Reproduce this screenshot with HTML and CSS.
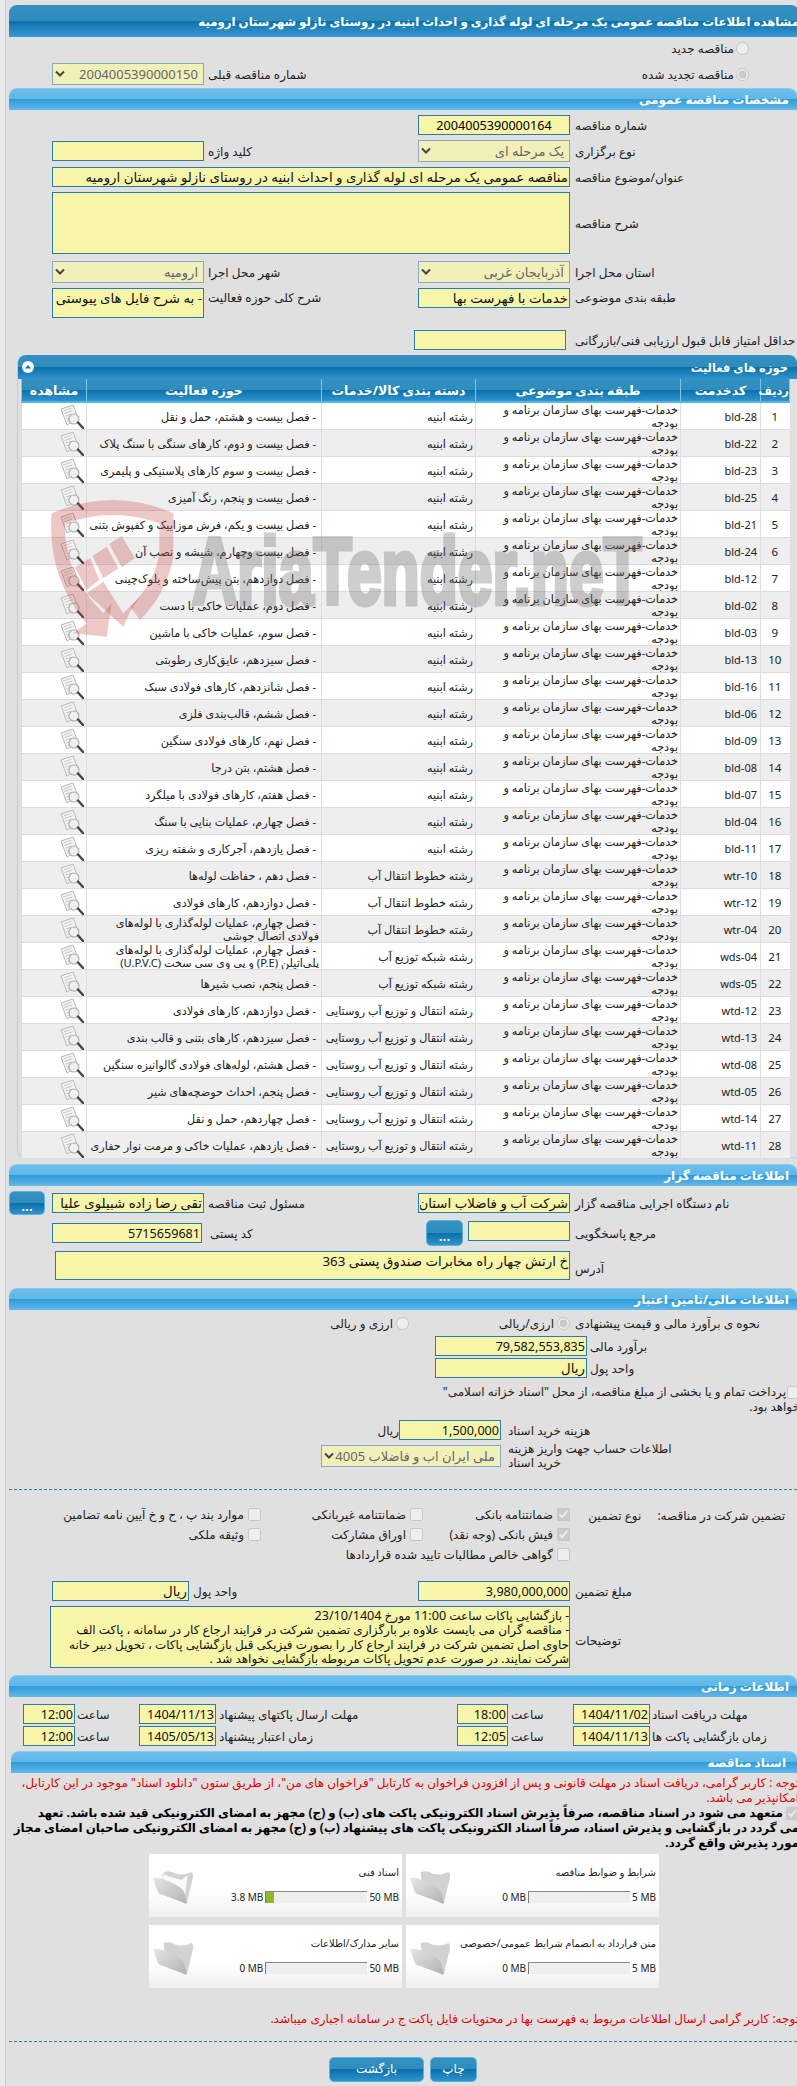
FILE: index.html
```html
<!DOCTYPE html>
<html lang="fa">
<head>
<meta charset="utf-8">
<title>مشاهده اطلاعات مناقصه</title>
<link rel="stylesheet" href="styles.css">
</head>
<body>
<svg class="defs" width="0" height="0" aria-hidden="true">
  <defs>
    <linearGradient id="fg" x1="0" y1="0" x2="1" y2="1"><stop offset="0" stop-color="#e6e6e6"/><stop offset="1" stop-color="#b2b2b2"/></linearGradient>
  </defs>
  <symbol id="doc" viewBox="0 0 24 25">
    <path d="M1 5 L13 1 L18 14 L7 21 Z" fill="#f4f4f4" stroke="#b8b8b8" stroke-width="1"/>
    <path d="M3.5 7 L11.5 4.2 M4.5 9.6 L12.5 6.8 M5.5 12.2 L11 10.2 M6.5 14.8 L10 13.5 M7.5 17.4 L10 16.5" stroke="#c0c0c0" stroke-width=".9" fill="none"/>
    <circle cx="14" cy="15" r="5" fill="#edf1f2" fill-opacity=".85" stroke="#ababab" stroke-width="1.1"/>
    <path d="M18 18.5 L23 24" stroke="#444" stroke-width="2.4" stroke-linecap="round"/>
  </symbol>
  <symbol id="folder" viewBox="0 0 44 37">
    <path d="M12 3 Q20 1 24 5 Q34 7 40 3 Q43 4 42 9 L36 34 Q35 36 33 35 L14 27 Z" fill="#d2d2d2"/>
    <path d="M1 9 Q9 8 22 15 Q32 20 33 24 L36 35 Q34 36 31 34 L9 26 Q6 25 5 21 Z" fill="url(#fg)"/>
  </symbol>
  <symbol id="folder-open" viewBox="0 0 44 37">
    <path d="M12 3 Q20 1 24 5 Q34 7 40 3 Q43 4 42 9 L36 34 Q35 36 33 35 L14 27 Z" fill="#d2d2d2"/>
    <path d="M10 5 L30 11 L37 6 L34 27 L14 20 Z" fill="#fafafa" stroke="#d8d8d8" stroke-width=".8"/>
    <path d="M1 9 Q9 8 22 15 Q32 20 33 24 L36 35 Q34 36 31 34 L9 26 Q6 25 5 21 Z" fill="url(#fg)"/>
  </symbol>
  <symbol id="chev" viewBox="0 0 10 8">
    <path d="M1 1.5 L5 5.5 L9 1.5" fill="none" stroke="#444" stroke-width="2"/>
  </symbol>
</svg>
<div class="page">
  <div class="wm" aria-hidden="true">
    <svg class="wm-shield" viewBox="0 0 450 510">
      <path d="M35 100 Q220 20 400 100 L400 230 Q380 340 300 420 L270 380 Q345 310 358 220 L358 130 Q220 80 75 130 Q70 280 190 400 L215 370 L200 470 L100 460 L140 430 Q20 290 35 100 Z"/>
      <path d="M105 262 L150 235 L178 300 L140 330 Z M158 228 L200 200 L235 265 L190 295 Z M208 192 L245 168 L285 235 L245 262 Z M140 340 L190 305 L250 400 L300 350 L270 395 L250 440 Z"/>
    </svg>
    <div class="wm-text">AriaTender.neT</div>
  </div>

  <div class="head dark title"><span>مشاهده اطلاعات مناقصه عمومی یک مرحله ای لوله گذاری و احداث ابنیه در روستای نازلو شهرستان ارومیه</span></div>

  <div class="choices">
    <label class="choice one"><input type="radio" disabled><span>مناقصه جدید</span></label>
    <div class="choice-row">
      <label class="choice"><input type="radio" disabled checked><span>مناقصه تجدید شده</span></label>
      <div class="prev">
        <span class="prev-lb">شماره مناقصه قبلی</span>
        <div class="sel f152 lat"><span>2004005390000150</span><svg class="chev"><use href="#chev"/></svg></div>
      </div>
    </div>
  </div>

  <div class="head light"><span>مشخصات مناقصه عمومی</span></div>

  <div class="form general">
    <div class="row h20"><span class="lb main">شماره مناقصه</span><input class="in f152 center lat strong" value="2004005390000164" readonly></div>
    <div class="row h22"><span class="lb main">نوع برگزاری</span><div class="sel f152"><span>یک مرحله ای</span><svg class="chev"><use href="#chev"/></svg></div><span class="lb second">کلید واژه</span><input class="in f152" readonly></div>
    <div class="row h20"><span class="lb main">عنوان/موضوع مناقصه</span><input class="in f518" value="مناقصه عمومی یک مرحله ای لوله گذاری و احداث ابنیه در روستای نازلو شهرستان ارومیه" readonly></div>
    <div class="row h62"><span class="lb main">شرح مناقصه</span><textarea class="in f518 fill" readonly></textarea></div>
    <div class="row h22 mt2"><span class="lb main">استان محل اجرا</span><div class="sel f152"><span>آذربایجان غربی</span><svg class="chev"><use href="#chev"/></svg></div><span class="lb second">شهر محل اجرا</span><div class="sel f152"><span>ارومیه</span><svg class="chev"><use href="#chev"/></svg></div></div>
    <div class="row h30 top"><span class="lb main">طبقه بندی موضوعی</span><input class="in f152 h20f" value="خدمات با فهرست بها" readonly><span class="lb second">شرح کلی حوزه فعالیت</span><textarea class="in f152 fill" readonly>- به شرح فایل های پیوستی</textarea></div>
    <div class="row h20 mt7"><span class="lb wide">حداقل امتیاز قابل قبول ارزیابی فنی/بازرگانی</span><input class="in f152" readonly></div>
  </div>

  <section class="panel">
    <div class="panel-head">
      <span>حوزه های فعالیت</span>
      <svg class="collapse" viewBox="0 0 12 12"><circle cx="6" cy="6" r="6" fill="#f4f8fb"/><path d="M3 7.5 L6 4 L9 7.5 Z" fill="#1b6f9f"/></svg>
    </div>
    <table class="grid">
      <colgroup><col class="c1"><col class="c2"><col class="c3"><col class="c4"><col class="c5"><col class="c6"></colgroup>
      <thead><tr><th>ردیف</th><th>کدخدمت</th><th>طبقه بندی موضوعی</th><th>دسته بندی کالا/خدمات</th><th>حوزه فعالیت</th><th>مشاهده</th></tr></thead>
      <tbody>
        <tr><td class="n">1</td><td class="code">bld-28</td><td>خدمات-فهرست بهای سازمان برنامه و بودجه</td><td>رشته ابنیه</td><td>&nbsp;- فصل بیست و هشتم، حمل و نقل</td><td class="v"><svg class="doc"><use href="#doc"/></svg></td></tr>
        <tr><td class="n">2</td><td class="code">bld-22</td><td>خدمات-فهرست بهای سازمان برنامه و بودجه</td><td>رشته ابنیه</td><td>&nbsp;- فصل بیست و دوم، کارهای سنگی با سنگ پلاک</td><td class="v"><svg class="doc"><use href="#doc"/></svg></td></tr>
        <tr><td class="n">3</td><td class="code">bld-23</td><td>خدمات-فهرست بهای سازمان برنامه و بودجه</td><td>رشته ابنیه</td><td>&nbsp;- فصل بیست و سوم کارهای پلاستیکی و پلیمری</td><td class="v"><svg class="doc"><use href="#doc"/></svg></td></tr>
        <tr><td class="n">4</td><td class="code">bld-25</td><td>خدمات-فهرست بهای سازمان برنامه و بودجه</td><td>رشته ابنیه</td><td>&nbsp;- فصل بیست و پنجم، رنگ آمیزی</td><td class="v"><svg class="doc"><use href="#doc"/></svg></td></tr>
        <tr><td class="n">5</td><td class="code">bld-21</td><td>خدمات-فهرست بهای سازمان برنامه و بودجه</td><td>رشته ابنیه</td><td>&nbsp;- فصل بیست و یکم، فرش موزاییک و کفپوش بتنی</td><td class="v"><svg class="doc"><use href="#doc"/></svg></td></tr>
        <tr><td class="n">6</td><td class="code">bld-24</td><td>خدمات-فهرست بهای سازمان برنامه و بودجه</td><td>رشته ابنیه</td><td>&nbsp;- فصل بیست وچهارم، شیشه و نصب آن</td><td class="v"><svg class="doc"><use href="#doc"/></svg></td></tr>
        <tr><td class="n">7</td><td class="code">bld-12</td><td>خدمات-فهرست بهای سازمان برنامه و بودجه</td><td>رشته ابنیه</td><td>&nbsp;- فصل دوازدهم، بتن پیش‌ساخته و بلوک‌چینی</td><td class="v"><svg class="doc"><use href="#doc"/></svg></td></tr>
        <tr><td class="n">8</td><td class="code">bld-02</td><td>خدمات-فهرست بهای سازمان برنامه و بودجه</td><td>رشته ابنیه</td><td>&nbsp;- فصل دوم، عملیات خاکی با دست</td><td class="v"><svg class="doc"><use href="#doc"/></svg></td></tr>
        <tr><td class="n">9</td><td class="code">bld-03</td><td>خدمات-فهرست بهای سازمان برنامه و بودجه</td><td>رشته ابنیه</td><td>&nbsp;- فصل سوم، عملیات خاکی با ماشین</td><td class="v"><svg class="doc"><use href="#doc"/></svg></td></tr>
        <tr><td class="n">10</td><td class="code">bld-13</td><td>خدمات-فهرست بهای سازمان برنامه و بودجه</td><td>رشته ابنیه</td><td>&nbsp;- فصل سیزدهم، عایق‌کاری رطوبتی</td><td class="v"><svg class="doc"><use href="#doc"/></svg></td></tr>
        <tr><td class="n">11</td><td class="code">bld-16</td><td>خدمات-فهرست بهای سازمان برنامه و بودجه</td><td>رشته ابنیه</td><td>&nbsp;- فصل شانزدهم، کارهای فولادی سبک</td><td class="v"><svg class="doc"><use href="#doc"/></svg></td></tr>
        <tr><td class="n">12</td><td class="code">bld-06</td><td>خدمات-فهرست بهای سازمان برنامه و بودجه</td><td>رشته ابنیه</td><td>&nbsp;- فصل ششم، قالب‌بندی فلزی</td><td class="v"><svg class="doc"><use href="#doc"/></svg></td></tr>
        <tr><td class="n">13</td><td class="code">bld-09</td><td>خدمات-فهرست بهای سازمان برنامه و بودجه</td><td>رشته ابنیه</td><td>&nbsp;- فصل نهم، کارهای فولادی سنگین</td><td class="v"><svg class="doc"><use href="#doc"/></svg></td></tr>
        <tr><td class="n">14</td><td class="code">bld-08</td><td>خدمات-فهرست بهای سازمان برنامه و بودجه</td><td>رشته ابنیه</td><td>&nbsp;- فصل هشتم، بتن درجا</td><td class="v"><svg class="doc"><use href="#doc"/></svg></td></tr>
        <tr><td class="n">15</td><td class="code">bld-07</td><td>خدمات-فهرست بهای سازمان برنامه و بودجه</td><td>رشته ابنیه</td><td>&nbsp;- فصل هفتم، کارهای فولادی با میلگرد</td><td class="v"><svg class="doc"><use href="#doc"/></svg></td></tr>
        <tr><td class="n">16</td><td class="code">bld-04</td><td>خدمات-فهرست بهای سازمان برنامه و بودجه</td><td>رشته ابنیه</td><td>&nbsp;- فصل چهارم، عملیات بنایی با سنگ</td><td class="v"><svg class="doc"><use href="#doc"/></svg></td></tr>
        <tr><td class="n">17</td><td class="code">bld-11</td><td>خدمات-فهرست بهای سازمان برنامه و بودجه</td><td>رشته ابنیه</td><td>&nbsp;- فصل یازدهم، آجرکاری و شفته ریزی</td><td class="v"><svg class="doc"><use href="#doc"/></svg></td></tr>
        <tr><td class="n">18</td><td class="code">wtr-10</td><td>خدمات-فهرست بهای سازمان برنامه و بودجه</td><td>رشته خطوط انتقال آب</td><td>&nbsp;- فصل دهم ، حفاظت لوله‌ها</td><td class="v"><svg class="doc"><use href="#doc"/></svg></td></tr>
        <tr><td class="n">19</td><td class="code">wtr-12</td><td>خدمات-فهرست بهای سازمان برنامه و بودجه</td><td>رشته خطوط انتقال آب</td><td>&nbsp;- فصل دوازدهم، کارهای فولادی</td><td class="v"><svg class="doc"><use href="#doc"/></svg></td></tr>
        <tr><td class="n">20</td><td class="code">wtr-04</td><td>خدمات-فهرست بهای سازمان برنامه و بودجه</td><td>رشته خطوط انتقال آب</td><td class="wrap">&nbsp;- فصل چهارم، عملیات لوله‌گذاری با لوله‌های فولادی اتصال جوشی</td><td class="v"><svg class="doc"><use href="#doc"/></svg></td></tr>
        <tr><td class="n">21</td><td class="code">wds-04</td><td>خدمات-فهرست بهای سازمان برنامه و بودجه</td><td>رشته شبکه توزیع آب</td><td class="wrap">&nbsp;- فصل چهارم، عملیات لوله‌گذاری با لوله‌های پلی‌اتیلن (P.E) و پی وی سی سخت (U.P.V.C)</td><td class="v"><svg class="doc"><use href="#doc"/></svg></td></tr>
        <tr><td class="n">22</td><td class="code">wds-05</td><td>خدمات-فهرست بهای سازمان برنامه و بودجه</td><td>رشته شبکه توزیع آب</td><td>&nbsp;- فصل پنجم، نصب شیرها</td><td class="v"><svg class="doc"><use href="#doc"/></svg></td></tr>
        <tr><td class="n">23</td><td class="code">wtd-12</td><td>خدمات-فهرست بهای سازمان برنامه و بودجه</td><td>رشته انتقال و توزیع آب روستایی</td><td>&nbsp;- فصل دوازدهم، کارهای فولادی</td><td class="v"><svg class="doc"><use href="#doc"/></svg></td></tr>
        <tr><td class="n">24</td><td class="code">wtd-13</td><td>خدمات-فهرست بهای سازمان برنامه و بودجه</td><td>رشته انتقال و توزیع آب روستایی</td><td>&nbsp;- فصل سیزدهم، کارهای بتنی و قالب بندی</td><td class="v"><svg class="doc"><use href="#doc"/></svg></td></tr>
        <tr><td class="n">25</td><td class="code">wtd-08</td><td>خدمات-فهرست بهای سازمان برنامه و بودجه</td><td>رشته انتقال و توزیع آب روستایی</td><td>&nbsp;- فصل هشتم، لوله‌های فولادی گالوانیزه سنگین</td><td class="v"><svg class="doc"><use href="#doc"/></svg></td></tr>
        <tr><td class="n">26</td><td class="code">wtd-05</td><td>خدمات-فهرست بهای سازمان برنامه و بودجه</td><td>رشته انتقال و توزیع آب روستایی</td><td>&nbsp;- فصل پنجم، احداث حوضچه‌های شیر</td><td class="v"><svg class="doc"><use href="#doc"/></svg></td></tr>
        <tr><td class="n">27</td><td class="code">wtd-14</td><td>خدمات-فهرست بهای سازمان برنامه و بودجه</td><td>رشته انتقال و توزیع آب روستایی</td><td>&nbsp;- فصل چهاردهم، حمل و نقل</td><td class="v"><svg class="doc"><use href="#doc"/></svg></td></tr>
        <tr><td class="n">28</td><td class="code">wtd-11</td><td>خدمات-فهرست بهای سازمان برنامه و بودجه</td><td>رشته انتقال و توزیع آب روستایی</td><td>&nbsp;- فصل یازدهم، عملیات خاکی و مرمت نوار حفاری</td><td class="v"><svg class="doc"><use href="#doc"/></svg></td></tr>
      </tbody>
    </table>
  </section>

  <div class="head light sec-vendor"><span>اطلاعات مناقصه گزار</span></div>
  <div class="form vendor">
    <div class="row h24"><span class="lb main">نام دستگاه اجرایی مناقصه گزار</span><input class="in f152" value="شرکت آب و فاضلاب استان" readonly><span class="lb second">مسئول ثبت مناقصه</span><input class="in f152" value="تقی رضا زاده شبیلوی علیا" readonly><button class="dots far" type="button">...</button></div>
    <div class="row h26"><span class="lb main">مرجع پاسخگویی</span><input class="in f102 up" readonly><button class="dots near" type="button">...</button><span class="lb post">کد پستی</span><input class="in f150 lat" value="5715659681" readonly></div>
    <div class="row h29"><span class="lb main low">آدرس</span><textarea class="in f515 fill" readonly>خ ارتش چهار راه مخابرات صندوق پستی 363</textarea></div>
  </div>

  <div class="head light sec-money"><span>اطلاعات مالی/تامین اعتبار</span></div>
  <div class="money">
    <div class="row h16 kind"><span class="lb main">نحوه ی برآورد مالی و قیمت پیشنهادی</span>
      <label class="choice tight cur"><input type="radio" disabled checked><span>ارزی/ریالی</span></label>
      <label class="choice tight"><input type="radio" disabled><span>ارزی و ریالی</span></label>
    </div>
    <div class="row h20 m5"><span class="lb est">برآورد مالی</span><input class="in f152 lat" value="79,582,553,835" readonly></div>
    <div class="row h20 m2"><span class="lb est">واحد پول</span><input class="in f152" value="ریال" readonly></div>
    <label class="treasury"><input type="checkbox" disabled>پرداخت تمام و یا بخشی از مبلغ مناقصه، از محل "اسناد خزانه اسلامی" خواهد بود.</label>
    <div class="row h20 m6"><span class="lb cost">هزینه خرید اسناد</span><input class="in f102 lat" value="1,500,000" readonly><span>ریال</span></div>
    <div class="row h22 m5 acct"><div class="lb cost"><span class="acct-lb">اطلاعات حساب جهت واریز هزینه خرید اسناد</span></div><div class="sel f180"><span>ملی ایران اب و فاضلاب 4005</span><svg class="chev"><use href="#chev"/></svg></div></div>
    <hr class="dash">
    <div class="guar">
      <div class="guar-lb"><span>تضمین شرکت در مناقصه:</span><span>نوع تضمین</span></div>
      <div class="guar-grid">
        <label class="g"><input type="checkbox" disabled checked><span>ضمانتنامه بانکی</span></label>
        <label class="g"><input type="checkbox" disabled><span>ضمانتنامه غیربانکی</span></label>
        <label class="g"><input type="checkbox" disabled><span>موارد بند پ ، ح و خ آیین نامه تضامین</span></label>
        <label class="g"><input type="checkbox" disabled checked><span>فیش بانکی (وجه نقد)</span></label>
        <label class="g"><input type="checkbox" disabled><span>اوراق مشارکت</span></label>
        <label class="g"><input type="checkbox" disabled><span>وثیقه ملکی</span></label>
        <label class="g span3"><input type="checkbox" disabled><span>گواهی خالص مطالبات تایید شده قراردادها</span></label>
      </div>
    </div>
    <div class="form amounts">
      <div class="row h20"><span class="lb main">مبلغ تضمین</span><input class="in f152 lat" value="3,980,000,000" readonly><span class="lb unit">واحد پول</span><input class="in f137" value="ریال" readonly></div>
      <div class="row h62"><span class="lb main low">توضیحات</span><div class="in note">- بازگشایی پاکات ساعت <span class="lat">11:00</span> مورخ <span class="lat">23/10/1404</span><br>- مناقصه گران می بایست علاوه بر بارگزاری تضمین شرکت در فرایند ارجاع کار در سامانه ، پاکت الف حاوی اصل تضمین شرکت در فرایند ارجاع کار را بصورت فیزیکی قبل بازگشایی پاکات ، تحویل دبیر خانه شرکت نمایند. در صورت عدم تحویل پاکات مربوطه بازگشایی نخواهد شد .</div></div>
    </div>
  </div>

  <div class="head light sec-time"><span>اطلاعات زمانی</span></div>
  <div class="form times">
    <div class="row h20"><span class="lb t1">مهلت دریافت اسناد</span><input class="in f77 lat" value="1404/11/02" readonly><span class="lb t2">ساعت</span><input class="in f51 lat" value="18:00" readonly><span class="lb t3">مهلت ارسال پاکتهای پیشنهاد</span><input class="in f77 lat" value="1404/11/13" readonly><span class="lb t4">ساعت</span><input class="in f52 lat" value="12:00" readonly></div>
    <div class="row h20"><span class="lb t1">زمان بازگشایی پاکت ها</span><input class="in f77 lat" value="1404/11/13" readonly><span class="lb t2">ساعت</span><input class="in f51 lat" value="12:05" readonly><span class="lb t3">زمان اعتبار پیشنهاد</span><input class="in f77 lat" value="1405/05/13" readonly><span class="lb t4">ساعت</span><input class="in f52 lat" value="12:00" readonly></div>
  </div>

  <div class="head light sec-docs"><span>اسناد مناقصه</span></div>
  <p class="warn first">توجه : کاربر گرامی، دریافت اسناد در مهلت قانونی و پس از افزودن فراخوان به کارتابل "فراخوان های من"، از طریق ستون "دانلود اسناد" موجود در این کارتابل،<br>امکانپذیر می باشد.</p>
  <label class="pledge"><input type="checkbox" disabled checked> متعهد می شود در اسناد مناقصه، صرفاً پذیرش اسناد الکترونیکی پاکت های (ب) و (ج) مجهز به امضای الکترونیکی قید شده باشد. تعهد<br>می گردد در بازگشایی و پذیرش اسناد، صرفاً اسناد الکترونیکی پاکت های پیشنهاد (ب) و (ج) مجهز به امضای الکترونیکی صاحبان امضای مجاز<br>مورد پذیرش واقع گردد.</label>

  <div class="cards">
    <div class="card">
      <div class="card-main">
        <div class="card-title">شرایط و ضوابط مناقصه</div>
        <div class="quota"><span>5 MB</span><div class="bar"></div><span>0 MB</span></div>
      </div>
      <svg class="folder"><use href="#folder"/></svg>
    </div>
    <div class="card">
      <div class="card-main">
        <div class="card-title">اسناد فنی</div>
        <div class="quota"><span>50 MB</span><div class="bar"><i style="width:7.6%"></i></div><span>3.8 MB</span></div>
      </div>
      <svg class="folder"><use href="#folder-open"/></svg>
    </div>
    <div class="card">
      <div class="card-main">
        <div class="card-title">متن قرارداد به انضمام شرایط عمومی/خصوصی</div>
        <div class="quota"><span>5 MB</span><div class="bar"></div><span>0 MB</span></div>
      </div>
      <svg class="folder"><use href="#folder"/></svg>
    </div>
    <div class="card">
      <div class="card-main">
        <div class="card-title">سایر مدارک/اطلاعات</div>
        <div class="quota"><span>50 MB</span><div class="bar"></div><span>0 MB</span></div>
      </div>
      <svg class="folder"><use href="#folder"/></svg>
    </div>
  </div>

  <p class="warn second-warn">توجه: کاربر گرامی ارسال اطلاعات مربوط به فهرست بها در محتویات فایل پاکت ج در سامانه اجباری میباشد.</p>
  <hr class="dash end">
  <div class="actions">
    <button class="act print" type="button">چاپ</button>
    <button class="act back" type="button">بازگشت</button>
  </div>
</div>
</body>
</html>
```

FILE: styles.css
```css
* { box-sizing: border-box; }
html, body { margin: 0; padding: 0; }
body {
  background: #e9e9e9;
  font-family: "Noto Sans", "DejaVu Sans", sans-serif;
  font-size: 12px;
  color: #222;
  overflow-x: hidden;
}
.defs { position: absolute; }

.page {
  position: relative;
  margin-left: 5px;
  height: 2086px;
  overflow: hidden;
  border-left: 1px solid #cacaca;
  padding: 5px 0 0 3px;
  background: #e0e0e0;
  direction: rtl;
}

/* section heads */
.head {
  height: 22px;
  border-radius: 8px 8px 0 0;
  color: #fff;
  font-weight: bold;
  display: flex;
  align-items: center;
  white-space: nowrap;
  padding: 0 8px;
}
.dark {
  background: linear-gradient(#3391c2 0%, #2f8dbe 50%, #0a70aa 50%, #3a9ad6 100%);
}
.light {
  border-top: 1px solid #86cef2;
  border-bottom: 1px solid #66b8e6;
  background: linear-gradient(#6cc0ec 0%, #5fb6e8 50%, #2b9bd9 50%, #5fb5e6 100%);
}
.title { height: 32px; font-size: 11.75px; padding: 0; margin-right: -2px; }
.sec-vendor { margin-top: 6px; }
.sec-money { margin-top: 8px; }
.sec-time { margin-top: 7px; }
.sec-docs { margin: 5px 0 0 2px; padding-right: 11px; }

/* top choices */
.choices { height: 51px; }
.choice {
  display: flex;
  align-items: center;
  gap: 2px;
  flex: none;
}
.choice input { margin: 0; }
.one { height: 23px; padding-right: 48px; }
.choice-row {
  display: flex;
  align-items: center;
  height: 28px;
  padding-right: 48px;
}
.prev {
  display: flex;
  align-items: center;
  margin-right: auto;
  margin-left: 43px;
}
.prev-lb { margin-left: 4px; }

/* form rows */
.form { display: flex; flex-direction: column; gap: 5px; }
.general { padding-top: 5px; }
.vendor { padding-top: 5px; gap: 5px; }
.row { display: flex; align-items: center; flex: none; }
.top { align-items: flex-start; }
.h16 { height: 16px; }
.h20 { height: 20px; }
.h22 { height: 22px; }
.h24 { height: 24px; }
.h26 { height: 26px; }
.h29 { height: 29px; }
.h30 { height: 30px; }
.h62 { height: 62px; }
.mt2 { margin-top: 2px; }
.mt7 { margin-top: 7px; }
.m2 { margin-top: 2px; }
.m5 { margin-top: 5px; }
.m6 { margin-top: 6px; }

.lb { flex: none; text-align: left; white-space: nowrap; }
.main { width: 227px; padding-left: 5px; }
.second { width: 214px; padding-left: 4px; }
.wide { width: 231px; padding-left: 9px; }
.post { width: 224px; padding-left: 8px; }
.est { width: 210px; padding-left: 3px; }
.cost { width: 296px; padding-left: 7px; }
.unit { width: 229px; padding-left: 4px; }
.low { padding-top: 6px; }
.t1 { width: 147px; padding-left: 2px; }
.t2 { width: 65px; padding-left: 3px; }
.t3 { width: 241px; padding-left: 3px; }
.t4 { width: 64px; padding-left: 2px; }
.top .lb { padding-top: 1px; }

.in {
  display: block;
  flex: none;
  height: 20px;
  margin: 0;
  padding: 0 1px;
  border: 1px solid #2a7bb0;
  background: #f7f5a8;
  color: #111;
  font: inherit;
  font-size: 13.33px;
  direction: rtl;
  outline: none;
  border-radius: 0;
  resize: none;
}
.fill { height: 100%; overflow: hidden; }
.h20f { height: 20px; }
.center { text-align: center; }
.up { margin-bottom: 5px; }
.f51 { width: 51px; }
.f52 { width: 52px; }
.f77 { width: 77px; }
.f102 { width: 102px; }
.f137 { width: 137px; }
.f150 { width: 150px; }
.f152 { width: 152px; }
.f180 { width: 180px; }
.f515 { width: 515px; }
.f518 { width: 518px; }
.lat { font-family: "Noto Sans", "DejaVu Sans", sans-serif; font-size: 12.6px; }
.strong { color: #000; }

.sel {
  flex: none;
  height: 22px;
  display: flex;
  align-items: center;
  justify-content: space-between;
  padding: 0 5px 0 2px;
  border: 1px solid #86a9bd;
  background: #f2f0b9;
  color: #666;
  font-size: 13px;
  white-space: nowrap;
  overflow: hidden;
}
.chev { width: 10px; height: 8px; flex: none; }

.dots {
  flex: none;
  width: 37px;
  height: 26px;
  padding: 8px 0 0;
  border: 1px solid #58b4de;
  border-radius: 5px;
  background: linear-gradient(#3391c2 0%, #2f8dbe 50%, #0a70aa 50%, #2f93cc 100%);
  color: #fff;
  font: bold 10px "DejaVu Sans", sans-serif;
}
.far { width: 36px; height: 24px; margin-right: 7px; }
.near { margin-right: 5px; }

/* activity panel */
.panel {
  margin-top: 5px;
  margin-left: 8px;
  border: 1px solid #a9d4ea;
  border-top: 0;
  border-right: 0;
  border-radius: 8px 8px 0 8px;
  height: 803px;
}
.panel-head {
  height: 24px;
  display: flex;
  align-items: center;
  justify-content: space-between;
  padding: 0 9px 0 4px;
  border-radius: 8px 8px 0 0;
  color: #fff;
  font-size: 11.5px;
  font-weight: bold;
  background: linear-gradient(#3391c2 0%, #2f8dbe 50%, #0a70aa 50%, #2f93cc 100%);
}
.collapse { width: 12px; height: 12px; }
.grid {
  width: 768px;
  margin: 0 7px 0 0;
  table-layout: fixed;
  border-collapse: collapse;
  font-size: 11.2px;
  line-height: 13px;
}
.c1 { width: 29px; }
.c2 { width: 80px; }
.c3 { width: 205px; }
.c4 { width: 154px; }
.c5 { width: 235px; }
.c6 { width: 65px; }
.grid th {
  height: 23px;
  padding: 0;
  color: #fff;
  font-size: 12.5px;
  font-weight: bold;
  border-right: 1px solid #7cc6ea;
  border-left: 1px solid #7cc6ea;
  border-bottom: 2px solid #5ab4e2;
  background: linear-gradient(#3391c2 0%, #2f8dbe 50%, #0a70aa 50%, #2f93cc 100%);
}
.grid th:first-child { font-size: 11.5px; }
.grid td {
  height: 27px;
  padding: 0 2px 0 1px;
  border-left: 1px solid #dedede;
  border-bottom: 1px solid #dcdcdc;
  background: #fff;
  text-align: right;
  overflow: hidden;
}
.grid td:nth-child(3) { padding-left: 12px; }
.grid td:nth-child(4),
.grid td:nth-child(5) { white-space: nowrap; }
.grid td.wrap { white-space: normal; }
.grid tbody tr:nth-child(even) td { background: #eeeeee; }
.grid td.n { text-align: center; font-size: 11.5px; }
.grid td.code { padding-right: 3px; font-size: 11px; }
.grid td.v { padding-right: 2px; line-height: 0; }
.doc { width: 24px; height: 25px; display: inline-block; vertical-align: top; }

/* money */
.kind { margin-top: 5px; }
.cur { width: 161px; }
.tight { gap: 3px; }
.treasury {
  display: block;
  margin: 7px -3px 0 0;
  padding-left: 424px;
  line-height: 14.5px;
  min-height: 29px;
}
.treasury input { margin: 0 0 0 1px; width: 13px; height: 13px; vertical-align: middle; }
.acct-lb { display: block; margin-right: 110px; white-space: normal; text-align: left; line-height: 14.5px; }
.acct .lb { padding-left: 7px; }
.dash {
  margin: 22px 0 0;
  height: 0;
  border: 0;
  border-top: 1px dashed #2a7fb0;
}
.guar { display: flex; margin-top: 14px; }
.guar-lb {
  flex: none;
  width: 227px;
  padding: 3px 12px 0 0;
  display: flex;
  gap: 16px;
}
.guar-grid {
  display: grid;
  grid-template-columns: 147px 162px 1fr;
  grid-auto-rows: 20px;
  align-items: center;
}
.g { display: flex; align-items: center; gap: 4px; white-space: nowrap; }
.g input { margin: 0; flex: none; width: 13px; height: 13px; }
.span3 { grid-column: span 3; }
.amounts { margin-top: 17px; }
.note {
  width: 520px;
  height: 62px;
  padding: 2px 0 0 1px;
  font-size: 12px;
  line-height: 14.3px;
  overflow: hidden;
}

.times { margin-top: 7px; gap: 2px; }

/* docs */
.warn { margin: 0; color: #e60000; line-height: 14.5px; white-space: nowrap; }
.first { margin: 3px -2px 0 0; }
.pledge {
  display: block;
  margin: 0 -2px 0 0;
  color: #000;
  font-size: 11.88px;
  font-weight: bold;
  line-height: 14.4px;
  white-space: nowrap;
}
.pledge input { margin: 0; width: 13px; height: 13px; vertical-align: middle; }
.cards {
  display: grid;
  grid-template-columns: 253px 253px;
  grid-auto-rows: 63px;
  gap: 8px 4px;
  margin: 5px 138px 0 0;
  width: 510px;
}
.card {
  display: flex;
  padding: 0 3px;
  background: linear-gradient(#fff 60%, #efefef);
  justify-content: space-between;
}
.card-main { flex: 1; padding-top: 11px; }
.card-title { height: 25px; font-size: 10px; white-space: nowrap; }
.quota { display: flex; align-items: center; gap: 2px; font-size: 10px; }
.quota span { direction: ltr; unicode-bidi: embed; }
.bar {
  width: 102px;
  height: 12px;
  background: #eee;
  border-top: 1px solid #888;
  border-left: 1px solid #777;
  direction: ltr;
}
.bar i { display: block; height: 100%; background: #8fb82a; }
.folder { width: 43px; height: 36px; margin-top: 15px; flex: none; }
.second-warn { margin: 24px -2px 0 0; }
.end { margin-top: 14px; }
.actions { display: flex; gap: 6px; margin: 15px 320px 0 0; }
.act {
  height: 25px;
  border: 1px solid #58b4de;
  border-radius: 5px;
  color: #fff;
  font: 12px "DejaVu Sans", sans-serif;
  background: linear-gradient(#3391c2 0%, #2f8dbe 50%, #0a70aa 50%, #2f93cc 100%);
}
.print { width: 47px; }
.back { width: 95px; }

/* watermark */
.wm {
  position: absolute;
  left: 0;
  top: 0;
  width: 100%;
  height: 0;
  pointer-events: none;
  z-index: 3;
  direction: ltr;
}
.wm-shield {
  position: absolute;
  left: 34px;
  top: 480px;
  width: 150px;
  height: 170px;
  fill: rgba(200, 70, 70, .3);
}
.wm-text {
  position: absolute;
  left: 186px;
  top: 516px;
  font: bold 95px/110px "Liberation Sans", sans-serif;
  color: #6e6e6e;
  opacity: .33;
  -webkit-text-stroke: 5px #6e6e6e;
  white-space: nowrap;
  transform: scaleX(.657);
  transform-origin: left top;
}
```
